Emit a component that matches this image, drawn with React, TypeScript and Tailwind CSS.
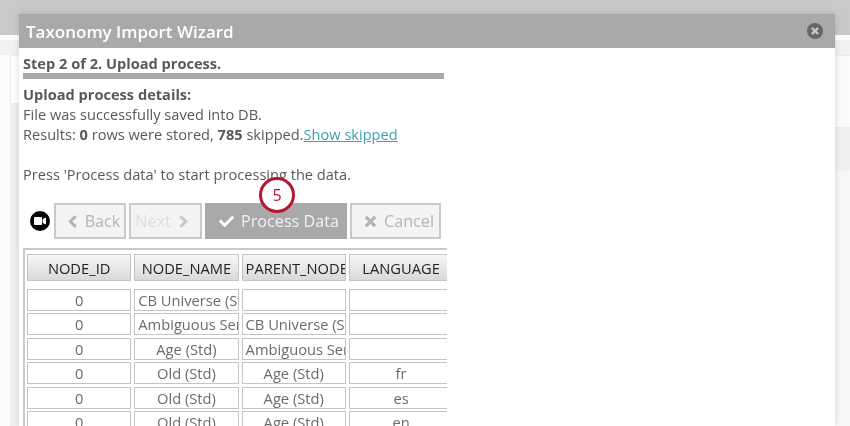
import React from "react";
import { FaCheck, FaTimes, FaChevronLeft, FaChevronRight, FaVideo } from "react-icons/fa";

const rows = [
  ["0", "CB Universe (Std)", "", ""],
  ["0", "Ambiguous Sentiment", "CB Universe (Std)", ""],
  ["0", "Age (Std)", "Ambiguous Sentiment", ""],
  ["0", "Old (Std)", "Age (Std)", "fr"],
  ["0", "Old (Std)", "Age (Std)", "es"],
  ["0", "Old (Std)", "Age (Std)", "en"],
];
const heads = ["NODE_ID", "NODE_NAME", "PARENT_NODE_NAME", "LANGUAGE"];
const CELL_W = "w-[104.3px]";

function NavButton({ children, extra }: { children: React.ReactNode; extra: string }) {
  return (
    <div className={`h-[36px] flex items-center justify-center gap-[6px] border-2 border-[#c9c9c9] bg-[#f4f4f4] text-[16.2px] ${extra}`}>
      {children}
    </div>
  );
}

export default function App() {
  return (
    <div className="w-[850px] h-[426px] overflow-hidden relative bg-white blur-[0.35px] font-['Open_Sans','Noto_Sans',sans-serif] text-[#595959]">
      {/* page behind the dialog */}
      <div className="h-[35px] bg-[#c9c9c9]" />
      <div className="h-[5px] bg-white" />
      <div className="h-[15px] bg-[#f2f2f2]" />
      <div className="h-[371px] flex">
        <div className="w-[10px] bg-[#fbfbfb]" />
        <div className="w-[9px] flex flex-col">
          <div className="h-[49px] bg-white border-l border-t border-b border-[#ececec]" />
          <div className="flex-1 bg-[#f0f0f0]" />
        </div>
        <div className="flex-1" />
        <div className="w-[15px] flex flex-col">
          <div className="h-[73px] bg-[#fbfbfb] border-t border-b border-[#ececec]" />
          <div className="h-[43px] bg-[#f0f0f0]" />
          <div className="flex-1 bg-[#f8f8f8]" />
        </div>
      </div>

      {/* dialog */}
      <div className="absolute left-[19px] top-[14px] w-[816px] h-[412px] bg-white flex flex-col overflow-hidden shadow-[0_0_7px_rgba(0,0,0,0.14)]">
        <div className="h-[34px] shrink-0 bg-[#a9a9a9] flex items-center justify-between pl-[7px] pr-[12px]">
          <span className="text-white text-[17px] font-semibold leading-none">Taxonomy Import Wizard</span>
          <span className="w-4 h-4 rounded-full bg-[#666666] flex items-center justify-center text-[#cccccc]">
            <FaTimes size={10} stroke="currentColor" strokeWidth={30} />
          </span>
        </div>
        <div className="pl-[4px] flex flex-col items-start">
          <div className="w-[421px] mt-[7px] text-[14.6px] font-bold leading-[17px] border-b-[6px] border-[#a9a9a9] h-[24px]">
            Step 2 of 2. Upload process.
          </div>
          <div className="mt-[5px] text-[14.6px] leading-[20px]">
            <div className="font-bold">Upload process details:</div>
            <div>File was successfully saved into DB.</div>
            <div>
              Results: <b>0</b> rows were stored, <b>785</b> skipped.
              <span className="underline text-[#3b9fb8]">Show skipped</span>
            </div>
            <div className="mt-[20px]">Press 'Process data' to start processing the data.</div>
          </div>
          <div className="mt-[19px] flex items-center gap-[3px] ml-[7px]">
            <span className="w-5 h-5 mr-[1px] rounded-full bg-black flex items-center justify-center text-white">
              <FaVideo size={12} />
            </span>
            <NavButton extra="w-[72px] pl-[6px] text-[#b5b5b5]">
              <FaChevronLeft size={13} stroke="currentColor" strokeWidth={40} />
              <span>Back</span>
            </NavButton>
            <NavButton extra="w-[73px] pr-[6px] text-[#dedede]">
              <span>Next</span>
              <FaChevronRight size={13} stroke="currentColor" strokeWidth={40} className="text-[#c9c9c9]" />
            </NavButton>
            <div className="h-[36px] w-[142px] pl-[6px] bg-[#a9a9a9] text-white text-[16.2px] flex items-center justify-center gap-[7px]">
              <FaCheck size={15} />
              <span className="text-[#f2f2f2]">Process Data</span>
            </div>
            <NavButton extra="w-[91px] pl-[6px] text-[#b5b5b5]">
              <FaTimes size={15} stroke="currentColor" strokeWidth={30} />
              <span>Cancel</span>
            </NavButton>
          </div>
          <div className="mt-[9px] w-[424px] border-2 border-r-0 border-b-0 border-[#c9c9c9] pl-[2px] pt-[4px] overflow-hidden">
            <div className="flex gap-[3px] mb-[8px]">
              {heads.map((h, i) => (
                <div key={h} className={`${CELL_W} h-[27px] pt-[1px] shrink-0 overflow-hidden whitespace-nowrap border border-[#c4c4c4] bg-gradient-to-b from-[#f7f7f7] to-[#d9d9d9] flex items-center text-[#222222] text-[14.7px] ${i === 2 ? "justify-start pl-[3px]" : "justify-center"}`}>
                  {h}
                </div>
              ))}
            </div>
            <div className="flex flex-col gap-[2.4px]">
              {rows.map((r, ri) => (
                <div key={ri} className="flex gap-[3px]">
                  {r.map((c, ci) => {
                    const clip = c.length > 14;
                    return (
                      <div key={ci} className={`${CELL_W} h-[22px] shrink-0 overflow-hidden whitespace-nowrap border border-[#c4c4c4] flex items-center text-[#6b6b6b] text-[14.7px] ${clip ? "justify-start pl-[3px]" : "justify-center"}`}>
                        {c}
                      </div>
                    );
                  })}
                </div>
              ))}
            </div>
          </div>
        </div>
      </div>

      {/* step badge */}
      <div className="absolute left-[259px] top-[177px] w-[36px] h-[36px] rounded-full bg-white border-[3px] border-[#b5172f] flex items-center justify-center text-[#b5172f] text-[16px]">
        5
      </div>
    </div>
  );
}
